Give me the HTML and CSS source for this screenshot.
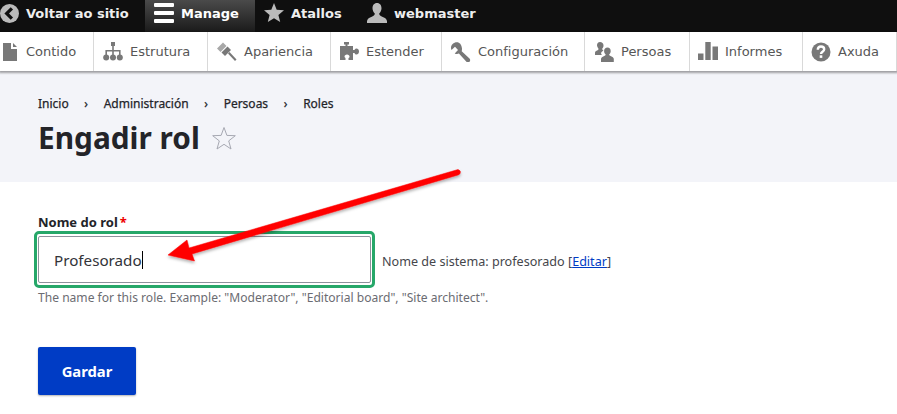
FILE: index.html
```html
<!DOCTYPE html>
<html lang="gl">
<head>
<meta charset="utf-8">
<title>Engadir rol</title>
<link rel="stylesheet" href="styles.css">
</head>
<body>
<nav class="topbar">
  <a class="top-tab tab-back"><svg class="top-icon icon-back" viewBox="0 0 20 20"><circle cx="10" cy="10" r="10" fill="#bbb"/><path d="M12.500 4.500 7 10l5.500 5.500" fill="none" stroke="#0f0f0f" stroke-width="3.400"/></svg>Voltar ao sitio</a>
  <a class="top-tab tab-manage"><svg class="top-icon" viewBox="0 0 20 20"><path d="M1 0h18a1 1 0 0 1 1 1v2a1 1 0 0 1-1 1H1a1 1 0 0 1-1-1V1a1 1 0 0 1 1-1zM1 8h18a1 1 0 0 1 1 1v2a1 1 0 0 1-1 1H1a1 1 0 0 1-1-1V9a1 1 0 0 1 1-1zM1 16h18a1 1 0 0 1 1 1v2a1 1 0 0 1-1 1H1a1 1 0 0 1-1-1v-2a1 1 0 0 1 1-1z" fill="#fff"/></svg>Manage</a>
  <a class="top-tab tab-short"><svg class="top-icon" viewBox="0 0 20 20"><path d="M10 0l2.700 6.800 7.300.5-5.600 4.700 1.800 7.100L10 15.200l-6.200 3.900 1.800-7.100L0 7.300l7.300-.5z" fill="#bbb"/></svg>Atallos</a>
  <a class="top-tab tab-user"><svg class="top-icon" viewBox="0 0 20 20"><path d="M10 0c3 0 4.500 2.300 4.500 5.300 0 2.200-1 4-2.300 5.200 0 1.500.8 2.300 3 3.200 2.500 1 4.300 1.800 4.800 4.300v2H0v-2c.5-2.500 2.300-3.300 4.800-4.300 2.200-.9 3-1.700 3-3.200C6.500 9.300 5.500 7.500 5.500 5.300 5.500 2.300 7 0 10 0z" fill="#bbb"/></svg>webmaster</a>
</nav>
<nav class="tray">
  <a class="tray-item w-contido"><svg class="tray-icon" viewBox="0 0 20 20"><path d="M3 1h8v6h6v12H3zM13 1l4 4h-4z" fill="#787878"/></svg>Contido</a>
  <a class="tray-item w-estrutura"><svg class="tray-icon" viewBox="0 0 20 20"><path d="M8 0h4v4H8zM9.200 4h1.600v4h6.800v5H16v-3.400h-5.200V13H9.200V9.600H4V13H2.400V8h6.800z" fill="#787878"/><circle cx="3.200" cy="15.500" r="3" fill="#787878"/><circle cx="10" cy="15.500" r="3" fill="#787878"/><circle cx="16.800" cy="15.500" r="3" fill="#787878"/></svg>Estrutura</a>
  <a class="tray-item w-apariencia"><svg class="tray-icon" viewBox="0 0 20 20"><path d="M0 6.500 6 .5l3.500 3.500-6 6z" fill="#a8a8a8"/><path d="M4.500 10.500l6-6 3.500 3.500-6 6z" fill="#787878"/><path d="M11 11.500l1.500-1.500 7 7.500-1.500 1.500z" fill="#787878"/></svg>Apariencia</a>
  <a class="tray-item w-estender"><svg class="tray-icon" viewBox="0 0 20 20"><path d="M1 4h5.500V2.500H5V0h5v2.500H8.500V4H14v4h1.500c.5-1 1-1.500 2-1.500 1.300 0 2.500 1.200 2.500 3s-1.200 3-2.500 3c-1 0-1.500-.5-2-1.500H14v7H9.500v-2c1-.5 1-1 1-1.500 0-1-1-2-2.500-2s-2.500 1-2.500 2c0 .5.200 1 1 1.500v2H1z" fill="#787878"/></svg>Estender</a>
  <a class="tray-item w-config"><svg class="tray-icon" viewBox="0 0 20 20"><path d="M6 .3C2.500.3 0 3 0 6c0 .8.200 1.500.5 2.100L4 4.800l3 3.200-3.300 3.400c.8.400 1.500.5 2.300.5.700 0 1.300-.1 1.900-.3l7.300 8c.9 1 2.400 1 3.300.1.900-.9.900-2.400 0-3.300l-7.800-7.200c.2-.6.300-1.200.3-2.700C10.500 2.500 8.500.3 6 .3z" fill="#787878"/></svg>Configuración</a>
  <a class="tray-item w-persoas"><svg class="tray-icon" viewBox="0 0 20 20"><path d="M6 0c2 0 3.500 1.500 3.500 3.500 0 1.300-.5 2.300-1.300 3.200.1 1 .5 1.400 1.300 1.800-.8.800-2 1.200-2.500 2.500.2 1 .5 1.500 1 2H1v-2.500c.3-1.300 1.300-1.800 2.500-2.300.9-.4 1-.8 1-1.500C3.500 5 3 4.300 3 3.200 3 1.500 4 0 6 0z" fill="#787878"/><path d="M13.500 5.500c2 0 3.200 1.500 3.200 3.500 0 1.500-.6 2.500-1.500 3.300 0 1 .5 1.400 1.800 1.900 1.500.6 2.500 1.200 2.800 2.500V20H7v-3.300c.3-1.300 1.300-1.900 2.800-2.500 1.300-.5 1.800-.9 1.800-1.900-.9-.8-1.500-1.800-1.500-3.300 0-2 1.400-3.500 3.400-3.500z" fill="#787878"/></svg>Persoas</a>
  <a class="tray-item w-informes"><svg class="tray-icon" viewBox="0 0 20 20"><path d="M0 11.500h5.500V18H0zM7.300 0h5.400v18H7.300zM14.500 4.500H20V18h-5.500z" fill="#787878"/></svg>Informes</a>
  <a class="tray-item w-axuda"><svg class="tray-icon" viewBox="0 0 20 20"><circle cx="10" cy="10" r="9.500" fill="#787878"/><path d="M6.800 7.800C6.800 5.500 8.300 4.500 10 4.500s3.200 1 3.200 2.800c0 2.500-3.200 2.500-3.200 4.700" fill="none" stroke="#fff" stroke-width="2.400"/><path d="M8.700 13.300h2.600v2.600H8.700z" fill="#fff"/></svg>Axuda</a>
</nav>
<header class="page-head">
  <ol class="crumbs">
    <li>Inicio</li><li class="sep">›</li><li>Administración</li><li class="sep">›</li><li>Persoas</li><li class="sep">›</li><li>Roles</li>
  </ol>
  <h1 class="title">Engadir rol<svg class="fav" viewBox="0 0 24 24"><path d="M12 1.500l2.900 7.900 8.400.3-6.600 5.200 2.300 8.100-7-4.700-7 4.700 2.300-8.100L.7 9.700l8.400-.3z" fill="none" stroke="#a6a8b2" stroke-width="1"/></svg></h1>
</header>
<main class="content">
  <label class="field-label" for="rol">Nome do rol<span class="req">*</span></label>
  <div class="field-row">
    <div class="input-ring"><div class="input-box" id="rol">Profesorado<span class="caret"></span></div></div>
    <span class="machine">Nome de sistema: profesorado [<a class="edit">Editar</a>]</span>
  </div>
  <p class="hint">The name for this role. Example: "Moderator", "Editorial board", "Site architect".</p>
  <button class="save">Gardar</button>
</main>
<svg class="arrow" viewBox="0 0 897 414" width="897" height="414">
  <defs><filter id="sh" x="-10%" y="-10%" width="120%" height="130%"><feDropShadow dx="0" dy="2" stdDeviation="1.500" flood-color="#000" flood-opacity=".3"/></filter></defs>
  <path d="M168 255 187 240l2 8L458 169.500q3.500 1 2 4q-.5 1-2 1.500L192 254l2.500 7z" fill="#f00" stroke="#f00" stroke-width=".5" stroke-linejoin="round" filter="url(#sh)"/>
</svg>
</body>
</html>
```
FILE: styles.css
```css
* { box-sizing: border-box; }
html, body { margin: 0; padding: 0; }
body { width: 897px; height: 414px; overflow: hidden; background: #fff; font-family: "Noto Sans", sans-serif; color: #232429; position: relative; }
.topbar { display: flex; height: 32px; background: #0f0f0f; font-family: "DejaVu Sans", sans-serif; font-size: 13px; font-weight: 700; color: #eee; }
.top-tab { display: flex; align-items: center; height: 32px; padding-bottom: 6px; }
.top-icon { width: 20px; height: 20px; flex: none; margin-right: 7px; }
.icon-back { width: 19px; height: 19px; }
.tab-back { width: 145px; }
.tab-manage { width: 110px; padding-left: 9px; background: linear-gradient(#4a4a4a, #1a1a1a); color: #fff; }
.tab-short { width: 97px; padding-left: 9px; }
.tab-user { padding-left: 15px; }
.tray { display: flex; height: 39px; background: #fff; box-shadow: 0 1px 2px 1px rgba(0,0,0,.35); position: relative; font-family: "DejaVu Sans", sans-serif; font-size: 13px; color: #565656; }
.tray-item { display: flex; align-items: center; height: 39px; border-right: 1px solid #d9d9d9; padding-left: 9px; }
.tray-icon { width: 20px; height: 20px; flex: none; margin-right: 7px; }
.w-contido { width: 94px; padding-left: 0; }
.w-contido .tray-icon { margin-right: 6px; }
.w-estrutura { width: 114px; }
.w-apariencia { width: 123px; }
.w-estender { width: 111px; padding-left: 8px; }
.w-config { width: 143px; }
.w-persoas { width: 105px; }
.w-informes { width: 113px; padding-left: 8px; }
.w-axuda { flex: 1; padding-left: 8px; }
.page-head { height: 111px; background: #f3f4f9; padding: 24px 38px 0; }
.crumbs { display: flex; list-style: none; margin: 0; padding: 0; font-size: 12px; line-height: 18px; color: #232429; -webkit-text-stroke: .25px #232429; }
.sep { width: 35px; text-align: center; }
.title { display: flex; align-items: center; margin: 5px 0 0; font-size: 29.8px; line-height: 40px; font-weight: 700; color: #232429; }
.fav { width: 24px; height: 24px; margin-left: 12px; flex: none; }
.content { padding: 31px 38px 0; }
.field-label { display: block; font-size: 13px; font-weight: 700; line-height: 18px; }
.req { color: #e00; margin-left: 2px; }
.field-row { display: flex; align-items: center; margin: 0 0 0 -4px; }
.input-ring { width: 341px; height: 57px; border: 3px solid #26a769; border-radius: 5px; padding: 2px 1px; }
.input-box { height: 100%; border: 1px solid #8e929c; border-radius: 2px; padding-left: 15px; display: flex; align-items: center; font-size: 15.2px; color: #333439; }
.caret { width: 1px; height: 18px; background: #000; }
.machine { margin: 3px 0 0 7px; font-size: 12.6px; color: #45464b; }
.edit { color: #003cc5; text-decoration: underline; }
.hint { margin: 1px 0 0; font-size: 12.08px; line-height: 18px; color: #6b6c72; }
.save { display: block; margin-top: 40px; width: 98px; height: 48px; border: 0; border-radius: 2px; background: #003cc5; color: #fff; font-family: inherit; font-size: 14.8px; font-weight: 700; box-shadow: 0 1px 2px rgba(0,0,0,.3); }
.arrow { position: absolute; left: 0; top: 0; pointer-events: none; }
```
